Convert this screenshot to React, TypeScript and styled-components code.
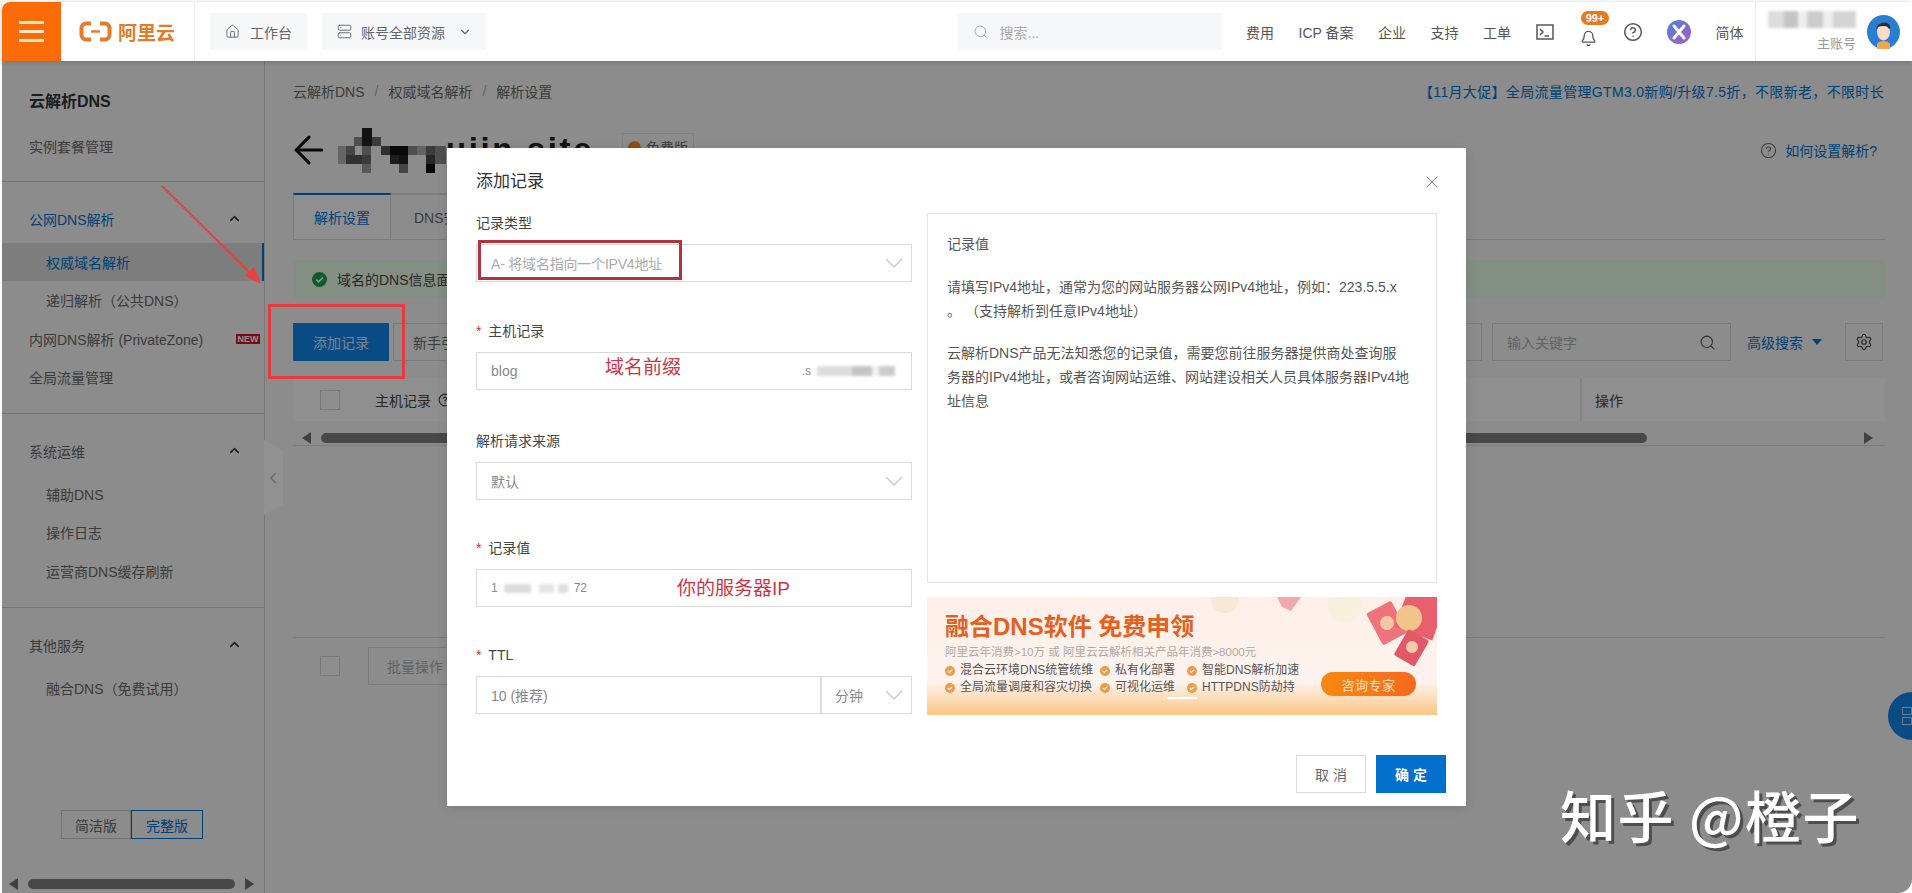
import * as React from 'react';
import styled, { createGlobalStyle } from 'styled-components';
import { ArrowLeft, Bell, ChevronDown, ChevronLeft, ChevronUp, CircleHelp, House, Search, Server, Settings, X } from 'lucide-react';

const FONT = '"Liberation Sans", "Noto Sans CJK SC", sans-serif';
const BLUE = '#0f82e6';

const GlobalStyle = createGlobalStyle`
  html, body { margin: 0; padding: 0; background: #fff; }
  body { font-family: ${FONT}; font-size: 14px; color: #555; overflow: hidden; }
  * { box-sizing: border-box; }
`;

const Frame = styled.div`
  position: relative;
  width: 1912px;
  height: 893px;
  padding: 2px 0 0 2px;
  background: #fbfbfb;
  display: flex;
  flex-direction: column;
  overflow: hidden;
  border-bottom-right-radius: 14px;
`;

/* top bar */
const Header = styled.header`
  height: 59px;
  flex: none;
  display: flex;
  align-items: stretch;
  background: #fff;
  position: relative;
  z-index: 3;
  box-shadow: 0 1px 4px rgba(0, 0, 0, 0.2);
`;

const Burger = styled.div`
  width: 59px;
  background: #fb6c08;
  border-top-left-radius: 8px;
  display: flex;
  flex-direction: column;
  justify-content: center;
  gap: 6px;
  padding: 0 17px;

  span {
    height: 3px;
    background: #ffe6c4;
  }
`;

const LogoBox = styled.div`
  width: 134px;
  border-right: 1px solid #eee;
  display: flex;
  align-items: center;
  gap: 6px;
  padding-left: 18px;
  color: #e47b28;
  font-size: 19px;
  font-weight: 700;
`;

const TopButton = styled.div<{ $width: number; $gap: number }>`
  width: ${(p) => p.$width}px;
  height: 37px;
  margin: 11px 0 0 15px;
  padding-left: 15px;
  background: #f5f7f8;
  display: flex;
  align-items: center;
  gap: ${(p) => p.$gap}px;
  color: #666;

  svg { flex: none; }
`;

const TopRight = styled.div`
  margin-left: auto;
  display: flex;
  align-items: center;
  gap: 24.5px;
  color: #555;
`;

const SearchBox = styled.div`
  width: 264px;
  height: 37px;
  background: #f5f7f8;
  color: #aaa;
  display: flex;
  align-items: center;
  gap: 11px;
  padding-left: 15px;
`;

const BellWrap = styled.div`
  position: relative;
  width: 20px;
  height: 20px;
  display: flex;
  justify-content: center;
  align-items: flex-end;
  margin-top: 10px;
`;

const Badge = styled.span`
  position: absolute;
  left: 3px;
  top: -16px;
  width: 28px;
  height: 14px;
  border-radius: 7px;
  background: #e8791e;
  color: #fff;
  font-size: 11px;
  font-weight: 700;
  line-height: 14px;
  text-align: center;
`;

const Profile = styled.div`
  width: 157px;
  margin-left: -13px;
  border-left: 1px solid #eee;
  display: flex;
  align-items: center;
  justify-content: flex-end;
  gap: 11px;
  padding-right: 12px;
  height: 59px;
`;

const ProfileText = styled.div`
  display: flex;
  flex-direction: column;
  align-items: flex-end;
  gap: 5px;
  color: #999;
  font-size: 13px;
`;

const Smudge = styled.span<{ $width: number; $height: number; $tone?: string }>`
  display: inline-block;
  width: ${(p) => p.$width}px;
  height: ${(p) => p.$height}px;
  background: ${(p) => p.$tone || '#d4d4d4'};
  filter: blur(1.5px);
`;

/* page under the mask */
const Body = styled.div`
  position: relative;
  flex: 1;
  min-height: 0;
  display: flex;
  background: #f2f2f2;
`;

const Mask = styled.div`
  position: absolute;
  inset: 0;
  background: rgba(0, 0, 0, 0.42);
  z-index: 2;
`;

const Sidebar = styled.aside`
  position: relative;
  width: 263px;
  flex: none;
  border-right: 1px solid #cfcfcf;
  display: flex;
  flex-direction: column;
  color: #666;
`;

const SideTitle = styled.div`
  padding: 29px 0 13px 27px;
  font-size: 16px;
  line-height: 24px;
  font-weight: 700;
  color: #333;
`;

const SideSection = styled.div<{ $plain?: boolean }>`
  padding: ${(p) => (p.$plain ? '0 0 15.5px' : '18px 0 17px')};
  border-bottom: 1px solid #c8c8c8;
`;

const SideGroup = styled.div<{ $active?: boolean; $top?: number }>`
  height: 38px;
  margin-top: ${(p) => p.$top || 0}px;
  padding: 0 22px 0 27px;
  margin-bottom: 5px;
  display: flex;
  align-items: center;
  justify-content: space-between;
  color: ${(p) => (p.$active ? '#0070cc' : '#666')};

  svg { color: #333; }
`;

const SideItem = styled.div<{ $sub?: boolean; $active?: boolean }>`
  height: 38.3px;
  padding-left: ${(p) => (p.$sub ? 44 : 27)}px;
  padding-right: 2px;
  display: flex;
  align-items: center;
  justify-content: space-between;
  color: ${(p) => (p.$active ? '#0070cc' : '#666')};
  background: ${(p) => (p.$active ? '#d7d7d7' : 'transparent')};
  border-right: 2px solid ${(p) => (p.$active ? '#0070cc' : 'transparent')};
`;

const NewTag = styled.span`
  width: 24px;
  height: 10px;
  background: #d3141c;
  color: #fff;
  font-size: 9px;
  font-weight: 700;
  line-height: 10px;
  text-align: center;
`;

const Toggle = styled.div`
  margin: auto 0 0 59px;
  display: flex;
`;

const ToggleBtn = styled.div<{ $on?: boolean }>`
  width: ${(p) => (p.$on ? 72 : 70)}px;
  height: 29px;
  border: 1px solid ${(p) => (p.$on ? '#0070cc' : '#c4c4c4')};
  color: ${(p) => (p.$on ? '#0070cc' : '#666')};
  display: flex;
  align-items: center;
  justify-content: center;
`;

const SideScroll = styled.div`
  margin-top: 40px;
  margin-bottom: 4px;
  height: 10px;
  padding-left: 7px;
  display: flex;
  align-items: center;
`;

const Thumb = styled.div<{ $width: number; $left: number }>`
  width: ${(p) => p.$width}px;
  height: 10px;
  margin-left: ${(p) => p.$left}px;
  border-radius: 5px;
  background: #7d7d7d;
`;

const Tri = styled.span<{ $right?: boolean; $left?: number }>`
  width: 0;
  height: 0;
  margin-left: ${(p) => p.$left || 0}px;
  border-top: 6px solid transparent;
  border-bottom: 6px solid transparent;
  ${(p) => (p.$right ? 'border-left: 9px solid #6f6f6f;' : 'border-right: 9px solid #6f6f6f;')}
`;

const Handle = styled.div`
  position: absolute;
  left: 100%;
  top: 379px;
  width: 19px;
  height: 75px;
  background: #fafafa;
  clip-path: polygon(0 0, 100% 14%, 100% 86%, 0 100%);
  display: flex;
  align-items: center;
  color: #bbb;
`;

const Main = styled.main`
  flex: 1;
  min-width: 0;
  padding: 19px 27px 0 28px;
  display: flex;
  flex-direction: column;
`;

const BreadRow = styled.div`
  height: 22px;
  display: flex;
  align-items: center;
  gap: 10px;
  color: #666;
`;

const Slash = styled.span`
  color: #aaa;
`;

const Promo = styled.span`
  margin-left: auto;
  margin-right: 1px;
  color: #0070cc;
  letter-spacing: 0.33px;
`;

const TitleRow = styled.div`
  margin-top: 28px;
  height: 40px;
  display: flex;
  align-items: center;
`;

const PageName = styled.span`
  font-size: 33px;
  font-weight: 700;
  color: #222;
  letter-spacing: 2.6px;
`;

const EditionTag = styled.span`
  margin-left: 28px;
  height: 28px;
  padding: 0 5px;
  display: flex;
  align-items: center;
  gap: 5px;
  border: 1px solid #ddd;
  color: #666;
  transform: translateY(-3px);
`;

const CoinDot = styled.i`
  width: 13px;
  height: 13px;
  border-radius: 50%;
  background: #f08a24;
`;

const HelpLink = styled.span`
  margin-left: auto;
  margin-right: 8px;
  display: flex;
  align-items: center;
  gap: 8px;
  color: #0070cc;

  svg { color: #666; }
`;

const Tabs = styled.div`
  margin-top: 23px;
  height: 47px;
  display: flex;
  border-bottom: 1px solid #d5d5d5;
`;

const Tab = styled.div<{ $active?: boolean }>`
  width: ${(p) => (p.$active ? 98 : 120)}px;
  height: 47px;
  padding-left: ${(p) => (p.$active ? 20 : 23)}px;
  display: flex;
  align-items: center;
  border: 1px solid #d5d5d5;
  border-left-width: ${(p) => (p.$active ? 1 : 0)}px;
  border-top: 2px solid ${(p) => (p.$active ? '#0070cc' : '#d5d5d5')};
  color: ${(p) => (p.$active ? '#0070cc' : '#666')};
  background: ${(p) => (p.$active ? '#f7f7f7' : 'transparent')};
`;

const AlertBar = styled.div`
  margin-top: 20px;
  height: 38px;
  padding-left: 19px;
  display: flex;
  align-items: center;
  gap: 10px;
  background: #e4f6e4;
  color: #444;
`;

const Toolbar = styled.div`
  margin-top: 25px;
  height: 38px;
  display: flex;
  align-items: stretch;
`;

const PrimaryBtn = styled.div`
  width: 96px;
  background: ${BLUE};
  color: #cfe6fa;
  display: flex;
  align-items: center;
  justify-content: center;
  border-radius: 1px;
`;

const GhostBtn = styled.div<{ $width: number; $left: number }>`
  width: ${(p) => p.$width}px;
  margin-left: ${(p) => p.$left}px;
  border: 1px solid #d5d5d5;
  color: #666;
  display: flex;
  align-items: center;
  justify-content: center;
`;

const KeyInput = styled.div`
  width: 239px;
  margin-left: 10px;
  padding: 0 14px;
  border: 1px solid #cfcfcf;
  display: flex;
  align-items: center;
  justify-content: space-between;
  color: #aaa;

  svg { color: #555; }
`;

const AdvLink = styled.div`
  margin-left: 16px;
  width: 98px;
  display: flex;
  align-items: center;
  gap: 9px;
  color: #0070cc;
`;

const Caret = styled.i`
  width: 0;
  height: 0;
  border-left: 5px solid transparent;
  border-right: 5px solid transparent;
  border-top: 6px solid #0070cc;
`;

const GearBtn = styled.div`
  width: 38px;
  border: 1px solid #d5d5d5;
  display: flex;
  align-items: center;
  justify-content: center;
  color: #444;
`;

const TableHead = styled.div`
  margin-top: 17px;
  height: 43px;
  padding-left: 27px;
  display: flex;
  align-items: center;
  background: #f7f7f7;
  color: #444;
`;

const CheckBox = styled.i`
  width: 20px;
  height: 20px;
  flex: none;
  border: 1px solid #d0d0d0;
  background: #f5f5f5;
`;

const HeadName = styled.span`
  margin-left: 35px;
  display: flex;
  align-items: center;
  gap: 7px;
`;

const OpCell = styled.div`
  margin-left: auto;
  width: 305px;
  height: 43px;
  padding-left: 13px;
  display: flex;
  align-items: center;
  border-left: 2px solid #e4e4e4;
`;

const TableScroll = styled.div`
  margin-top: 12px;
  height: 13px;
  padding: 0 12px 3px 9px;
  display: flex;
  align-items: center;
  justify-content: space-between;
  border-bottom: 1px solid #d5d5d5;
`;

const TrackLeft = styled.div`
  display: flex;
  align-items: center;
`;

const TableFoot = styled.div`
  margin-top: 191px;
  padding: 9px 0 0 27px;
  border-top: 1px solid #d5d5d5;
  display: flex;
  align-items: center;
  gap: 28px;
  color: #aaa;
`;

const BatchBtn = styled.div`
  width: 120px;
  height: 38px;
  padding-left: 18px;
  display: flex;
  align-items: center;
  border: 1px solid #d5d5d5;
`;

const FloatBall = styled.div`
  position: absolute;
  right: -24px;
  top: 631px;
  width: 48px;
  height: 48px;
  padding-left: 14px;
  border-radius: 50%;
  background: ${BLUE};
  display: flex;
  flex-direction: column;
  justify-content: center;
  gap: 2px;

  i {
    width: 10px;
    height: 8px;
    border: 1px solid #bcd8f0;
  }
`;

/* dialog */
const Dialog = styled.div`
  position: absolute;
  left: 447px;
  top: 148px;
  width: 1019px;
  height: 658px;
  background: #fff;
  z-index: 4;
  display: flex;
  flex-direction: column;
  box-shadow: 0 2px 10px rgba(0, 0, 0, 0.12);
`;

const DialogHead = styled.div`
  padding: 22px 24px 0 29px;
  height: 46px;
  display: flex;
  align-items: center;
  justify-content: space-between;
  font-size: 17px;
  line-height: 24px;
  color: #333;

  svg { color: #777; }
`;

const DialogBody = styled.div`
  padding: 19px 29px 0;
  display: grid;
  grid-template-columns: 436px 510px;
  column-gap: 15px;
`;

const FormItem = styled.div<{ $top?: number }>`
  margin-top: ${(p) => p.$top || 0}px;
`;

const Label = styled.div<{ $required?: boolean }>`
  height: 21px;
  margin-bottom: 10px;
  line-height: 20px;
  color: #444;

  &::before {
    content: ${(p) => (p.$required ? "'* '" : 'none')};
    color: #c0303a;
    margin-right: 3px;
  }
`;

const Control = styled.div`
  position: relative;
  height: 38px;
  padding: 0 8px 0 14px;
  border: 1px solid #d9d9d9;
  display: flex;
  align-items: center;
  justify-content: space-between;
  color: #888;
`;

const Chevron = styled.svg`
  flex: none;
  width: 18px;
  height: 10px;
  fill: none;
  stroke: #c4c4c4;
  stroke-width: 1.2;
`;

const Placeholder = styled.span`
  color: #aaa;
  letter-spacing: -0.2px;
`;

const Suffix = styled.span`
  display: flex;
  align-items: center;
  gap: 6px;
  margin-right: 8px;
  color: #888;
  font-size: 12px;
`;

const RedNote = styled.span<{ $left: number; $top: number }>`
  position: absolute;
  left: ${(p) => p.$left}px;
  top: ${(p) => p.$top}px;
  color: #c8384a;
  font-size: 19px;
  line-height: 24px;
  white-space: nowrap;
`;

const UnitCell = styled.div`
  width: 91px;
  height: 36px;
  margin-right: -8px;
  padding: 0 8px 0 13px;
  border-left: 2px solid #ddd;
  display: flex;
  align-items: center;
  justify-content: space-between;
`;

const RedBox = styled.div`
  position: absolute;
  left: 1px;
  top: -5px;
  width: 204px;
  height: 40px;
  border: 3px solid #b2333e;
`;

const SideCol = styled.div`
  display: flex;
  flex-direction: column;
`;

const InfoBox = styled.div`
  height: 370px;
  padding: 18px 19px;
  border: 1px solid #e4e4e4;
  line-height: 24px;
  color: #555;
  white-space: nowrap;

  p { margin: 0 0 18.5px; }
`;

const Banner = styled.div`
  position: relative;
  margin-top: 14px;
  height: 118px;
  padding: 15px 21px 0 18px;
  overflow: hidden;
  background: linear-gradient(180deg, #fdefe8 0%, #fdf3ee 72%, #fbc684 100%);
`;

const BannerArt = styled.svg`
  position: absolute;
  inset: 0;
`;

const BannerTitle = styled.div`
  position: relative;
  font-size: 24px;
  line-height: 30px;
  font-weight: 700;
  color: #e5601e;
`;

const BannerSub = styled.div`
  position: relative;
  margin-top: 3px;
  font-size: 11.5px;
  line-height: 14px;
  color: #b0a8a4;
`;

const BannerFoot = styled.div`
  position: relative;
  margin-top: 3px;
  display: flex;
  justify-content: space-between;
  align-items: flex-end;
`;

const BulletGrid = styled.div`
  display: grid;
  grid-template-columns: 155px 87px auto;
  font-size: 12px;
  line-height: 17px;
  color: #555;
`;

const Bullet = styled.span`
  display: flex;
  align-items: center;
  gap: 5px;
  white-space: nowrap;
`;

const Cta = styled.div`
  width: 95px;
  height: 24px;
  border-radius: 12px;
  background: linear-gradient(90deg, #f8890f, #f56a1e);
  color: #fde2c8;
  font-size: 13px;
  display: flex;
  align-items: center;
  justify-content: center;
  letter-spacing: 0.5px;
`;

const Pager = styled.i`
  position: absolute;
  left: 240px;
  top: 100px;
  width: 30px;
  height: 2px;
  background: #fff;
`;

const DialogFoot = styled.div`
  margin-top: 40px;
  padding-right: 20px;
  display: flex;
  justify-content: flex-end;
  gap: 10px;
`;

const FootBtn = styled.div<{ $primary?: boolean }>`
  width: 70px;
  height: 38px;
  display: flex;
  align-items: center;
  justify-content: center;
  letter-spacing: 4px;
  padding-left: 4px;
  background: ${(p) => (p.$primary ? '#0070cc' : '#fff')};
  border: 1px solid ${(p) => (p.$primary ? '#0070cc' : '#d9d9d9')};
  color: ${(p) => (p.$primary ? '#fff' : '#666')};
  font-weight: ${(p) => (p.$primary ? 700 : 400)};
`;

/* hand drawn notes on top of the shot */
const NoteBox = styled.div`
  position: absolute;
  left: 268px;
  top: 304px;
  width: 137px;
  height: 75px;
  border: 3px solid #e53a3f;
  z-index: 5;
`;

const NoteArrow = styled.svg`
  position: absolute;
  left: 155px;
  top: 180px;
  z-index: 5;
`;

const Watermark = styled.div`
  position: absolute;
  left: 1560px;
  top: 774px;
  z-index: 5;
  font-family: "Noto Sans CJK SC", sans-serif;
  font-size: 56px;
  line-height: 80px;
  font-weight: 500;
  color: #fff;
  white-space: nowrap;
  letter-spacing: 1.5px;
  text-shadow: 3px 3px 0 #4e4e4e;
`;

const AliLogo = () => (
  <svg width="33" height="21" viewBox="0 0 33 21" fill="none" stroke="#e47b28" strokeWidth="4">
    <path d="M12 2.5H7A4.5 4.5 0 0 0 2.5 7v7A4.5 4.5 0 0 0 7 18.500H12" />
    <path d="M21 2.500H26A4.500 4.500 0 0 1 30.500 7v7A4.500 4.500 0 0 1 26 18.500H21" />
    <path d="M12 10.500H21" strokeWidth="2.500" />
  </svg>
);

const TerminalIcon = () => (
  <svg width="18" height="16" viewBox="0 0 18 16" fill="none" stroke="#555" strokeWidth="1.500">
    <rect x="1" y="1" width="16" height="14" />
    <path d="M4 5l3 3-3 3M8.500 12H13" />
  </svg>
);

const OrbIcon = () => (
  <svg width="24" height="24" viewBox="0 0 24 24">
    <defs>
      <linearGradient id="orb" x1="0" y1="0" x2="1" y2="1">
        <stop offset="0" stopColor="#4f7fe0" />
        <stop offset="1" stopColor="#a45fc0" />
      </linearGradient>
    </defs>
    <circle cx="12" cy="12" r="12" fill="url(#orb)" />
    <path d="M7 6l10 12M17 6L7 18" stroke="#fff" strokeWidth="3" strokeLinecap="round" />
  </svg>
);

const Avatar = () => (
  <svg width="33" height="34" viewBox="0 0 33 34">
    <ellipse cx="16.500" cy="17" rx="16.500" ry="17" fill="#2a7ed2" />
    <path d="M10 29c1-4 12-4 13 0v5H10z" fill="#f2a54a" />
    <ellipse cx="16.500" cy="17" rx="6.500" ry="8.500" fill="#f8dcc8" />
    <path d="M9.500 15c-1-8 13-11 14-2l-1.500 1c-2-4-7-3-11-2z" fill="#26303c" />
  </svg>
);

const CheckDot = ({ size, color }: { size: number; color: string }) => (
  <svg width={size} height={size} viewBox="0 0 16 16" style={{ flex: 'none' }}>
    <circle cx="8" cy="8" r="8" fill={color} />
    <path d="M4.500 8l2.500 2.500 4.500-4.500" fill="none" stroke="#fff" strokeWidth="1.800" />
  </svg>
);

const SelectArrow = () => (
  <Chevron viewBox="0 0 18 10">
    <path d="M1 1l8 8 8-8" />
  </Chevron>
);

const PIXELS: [number, number, number, number, string][] = [
  [0, 18, 8, 18, '#b0b0b0'], [8, 18, 9, 9, '#777'], [8, 27, 16, 9, '#555'], [16, 9, 8, 9, '#8a8a8a'],
  [24, 0, 10, 18, '#222'], [34, 9, 9, 9, '#666'], [24, 18, 9, 9, '#888'], [24, 27, 9, 9, '#666'],
  [24, 36, 9, 9, '#999'], [43, 18, 9, 9, '#555'], [52, 18, 19, 9, '#111'], [52, 27, 9, 9, '#333'],
  [61, 27, 9, 9, '#222'], [61, 36, 9, 9, '#777'], [70, 18, 9, 9, '#888'], [79, 18, 9, 9, '#aaa'],
  [88, 18, 9, 9, '#666'], [88, 27, 9, 9, '#444'], [88, 36, 9, 9, '#111'], [97, 18, 11, 18, '#888'],
];

const BlurredName = () => (
  <svg width="108" height="45" viewBox="0 0 108 45" style={{ flex: 'none', marginLeft: 15 }}>
    {PIXELS.map(([x, y, w, h, fill]) => (
      <rect key={`${x}-${y}`} x={x} y={y} width={w} height={h} fill={fill} />
    ))}
  </svg>
);

const BannerDecor = () => (
  <BannerArt width="510" height="118" viewBox="0 0 510 118">
    <circle cx="298" cy="2" r="14" fill="#f6ead6" />
    <circle cx="418" cy="8" r="17" fill="#f7f0dc" />
    <path d="M350 0h24l-10 14-9-4z" fill="#f0a8ac" />
    <g transform="rotate(-28 460 26)">
      <rect x="446" y="8" width="28" height="36" rx="2" fill="#f0737c" />
      <circle cx="460" cy="26" r="7" fill="#f3c9a4" />
    </g>
    <rect x="474" y="-6" width="40" height="44" fill="#e8606e" transform="rotate(20 494 16)" />
    <circle cx="482" cy="21" r="13" fill="#f0c48a" />
    <g transform="rotate(30 485 50)">
      <rect x="473" y="36" width="24" height="30" rx="2" fill="#e25866" />
      <circle cx="485" cy="50" r="6" fill="#f4c9a8" />
    </g>
  </BannerArt>
);

const BULLETS = ['混合云环境DNS统管统维', '私有化部署', '智能DNS解析加速', '全局流量调度和容灾切换', '可视化运维', 'HTTPDNS防劫持'];

const App = () => (
  <Frame>
    <GlobalStyle />
    <Header>
      <Burger>
        <span />
        <span />
        <span />
      </Burger>
      <LogoBox>
        <AliLogo />
        阿里云
      </LogoBox>
      <TopButton $width={97} $gap={10}>
        <House size={15} strokeWidth={1.5} />
        工作台
      </TopButton>
      <TopButton $width={164} $gap={9}>
        <Server size={15} strokeWidth={1.5} />
        账号全部资源
        <ChevronDown size={14} style={{ marginLeft: 4 }} />
      </TopButton>
      <TopRight>
        <SearchBox>
          <Search size={16} strokeWidth={1.5} />
          搜索...
        </SearchBox>
        <span>费用</span>
        <span>ICP 备案</span>
        <span>企业</span>
        <span>支持</span>
        <span>工单</span>
        <TerminalIcon />
        <BellWrap>
          <Bell size={17} strokeWidth={1.8} />
          <Badge>99+</Badge>
        </BellWrap>
        <CircleHelp size={20} strokeWidth={1.8} />
        <OrbIcon />
        <span>简体</span>
        <Profile>
          <ProfileText>
            <Smudge $width={88} $height={17} $tone="linear-gradient(90deg, #ddd 0 18%, #c4c4c4 18% 34%, #eee 34% 44%, #ccc 44% 62%, #eee 62% 74%, #d4d4d4 74% 100%)" />
            主账号
          </ProfileText>
          <Avatar />
        </Profile>
      </TopRight>
    </Header>

    <Body>
      <Sidebar>
        <SideSection $plain>
          <SideTitle>云解析DNS</SideTitle>
          <SideItem>实例套餐管理</SideItem>
        </SideSection>
        <SideSection>
          <SideGroup $active>
            公网DNS解析
            <ChevronUp size={15} strokeWidth={2.5} />
          </SideGroup>
          <SideItem $sub $active>权威域名解析</SideItem>
          <SideItem $sub>递归解析（公共DNS）</SideItem>
          <SideItem>
            内网DNS解析 (PrivateZone)
            <NewTag>NEW</NewTag>
          </SideItem>
          <SideItem>全局流量管理</SideItem>
        </SideSection>
        <SideSection>
          <SideGroup>
            系统运维
            <ChevronUp size={15} strokeWidth={2.5} />
          </SideGroup>
          <SideItem $sub>辅助DNS</SideItem>
          <SideItem $sub>操作日志</SideItem>
          <SideItem $sub>运营商DNS缓存刷新</SideItem>
        </SideSection>
        <SideGroup $top={18}>
          其他服务
          <ChevronUp size={15} strokeWidth={2.5} />
        </SideGroup>
        <SideItem $sub>融合DNS（免费试用）</SideItem>
        <Toggle>
          <ToggleBtn>简洁版</ToggleBtn>
          <ToggleBtn $on>完整版</ToggleBtn>
        </Toggle>
        <SideScroll>
          <Tri />
          <Thumb $width={207} $left={10} />
          <Tri $right $left={10} />
        </SideScroll>
        <Handle>
          <ChevronLeft size={18} />
        </Handle>
      </Sidebar>

      <Main>
        <BreadRow>
          云解析DNS
          <Slash>/</Slash>
          权威域名解析
          <Slash>/</Slash>
          解析设置
          <Promo>【11月大促】全局流量管理GTM3.0新购/升级7.5折，不限新老，不限时长</Promo>
        </BreadRow>
        <TitleRow>
          <ArrowLeft size={44} strokeWidth={1.7} color="#111" style={{ margin: '0 -8px 0 -6px' }} />
          <BlurredName />
          <PageName>uiin.site</PageName>
          <EditionTag>
            <CoinDot />
            免费版
          </EditionTag>
          <HelpLink>
            <CircleHelp size={17} strokeWidth={1.5} />
            如何设置解析?
          </HelpLink>
        </TitleRow>
        <Tabs>
          <Tab $active>解析设置</Tab>
          <Tab>DNS安全</Tab>
        </Tabs>
        <AlertBar>
          <CheckDot size={15} color="#1d9b4b" />
          域名的DNS信息面
        </AlertBar>
        <Toolbar>
          <PrimaryBtn>添加记录</PrimaryBtn>
          <GhostBtn $width={96} $left={4}>新手引导</GhostBtn>
          <GhostBtn $width={100} $left={893} />
          <KeyInput>
            输入关键字
            <Search size={17} strokeWidth={1.5} />
          </KeyInput>
          <AdvLink>
            高级搜索
            <Caret />
          </AdvLink>
          <GearBtn>
            <Settings size={18} strokeWidth={1.6} />
          </GearBtn>
        </Toolbar>
        <TableHead>
          <CheckBox />
          <HeadName>
            主机记录
            <CircleHelp size={14} />
          </HeadName>
          <OpCell>操作</OpCell>
        </TableHead>
        <TableScroll>
          <TrackLeft>
            <Tri />
            <Thumb $width={1326} $left={10} />
          </TrackLeft>
          <Tri $right />
        </TableScroll>
        <TableFoot>
          <CheckBox />
          <BatchBtn>批量操作</BatchBtn>
        </TableFoot>
      </Main>
      <FloatBall>
        <i />
        <i />
      </FloatBall>
      <Mask />
    </Body>

    <Dialog>
      <DialogHead>
        添加记录
        <X size={20} strokeWidth={1.2} />
      </DialogHead>
      <DialogBody>
        <div>
          <FormItem>
            <Label>记录类型</Label>
            <Control>
              <Placeholder>A- 将域名指向一个IPV4地址</Placeholder>
              <SelectArrow />
              <RedBox />
            </Control>
          </FormItem>
          <FormItem $top={39}>
            <Label $required>主机记录</Label>
            <Control>
              blog
              <RedNote $left={128} $top={3}>域名前缀</RedNote>
              <Suffix>
                .s
                <Smudge $width={78} $height={10} $tone="linear-gradient(90deg, #ddd 0 45%, #c4c4c4 45% 70%, #f0f0f0 70% 80%, #ccc 80% 100%)" />
              </Suffix>
            </Control>
          </FormItem>
          <FormItem $top={41}>
            <Label>解析请求来源</Label>
            <Control>
              默认
              <SelectArrow />
            </Control>
          </FormItem>
          <FormItem $top={38}>
            <Label $required>记录值</Label>
            <Control>
              <Suffix>
                1
                <Smudge $width={64} $height={9} $tone="linear-gradient(90deg, #dcdcdc 0 42%, #fff 42% 55%, #e4e4e4 55% 78%, #fff 78% 84%, #dedede 84% 100%)" />
                72
              </Suffix>
              <RedNote $left={200} $top={7}>你的服务器IP</RedNote>
            </Control>
          </FormItem>
          <FormItem $top={38}>
            <Label $required>TTL</Label>
            <Control>
              10 (推荐)
              <UnitCell>
                分钟
                <SelectArrow />
              </UnitCell>
            </Control>
          </FormItem>
        </div>
        <SideCol>
          <InfoBox>
            <p>记录值</p>
            <p>
              请填写IPv4地址，通常为您的网站服务器公网IPv4地址，例如：223.5.5.x
              <br />
              。 （支持解析到任意IPv4地址）
            </p>
            <p>
              云解析DNS产品无法知悉您的记录值，需要您前往服务器提供商处查询服
              <br />
              务器的IPv4地址，或者咨询网站运维、网站建设相关人员具体服务器IPv4地
              <br />
              址信息
            </p>
          </InfoBox>
          <Banner>
            <BannerDecor />
            <BannerTitle>融合DNS软件 免费申领</BannerTitle>
            <BannerSub>阿里云年消费&gt;10万 或 阿里云云解析相关产品年消费&gt;8000元</BannerSub>
            <BannerFoot>
              <BulletGrid>
                {BULLETS.map((text) => (
                  <Bullet key={text}>
                    <CheckDot size={10} color="#ef9a45" />
                    {text}
                  </Bullet>
                ))}
              </BulletGrid>
              <Cta>咨询专家</Cta>
            </BannerFoot>
            <Pager />
          </Banner>
        </SideCol>
      </DialogBody>
      <DialogFoot>
        <FootBtn>取消</FootBtn>
        <FootBtn $primary>确定</FootBtn>
      </DialogFoot>
    </Dialog>

    <NoteBox />
    <NoteArrow width="115" height="110" viewBox="0 0 115 110">
      <path d="M7 6L100 98" stroke="#e8413f" strokeWidth="2" />
      <path d="M106 104L90 96l9-9z" fill="#e8413f" />
    </NoteArrow>
    <Watermark>知乎 @橙子</Watermark>
  </Frame>
);

export default App;
